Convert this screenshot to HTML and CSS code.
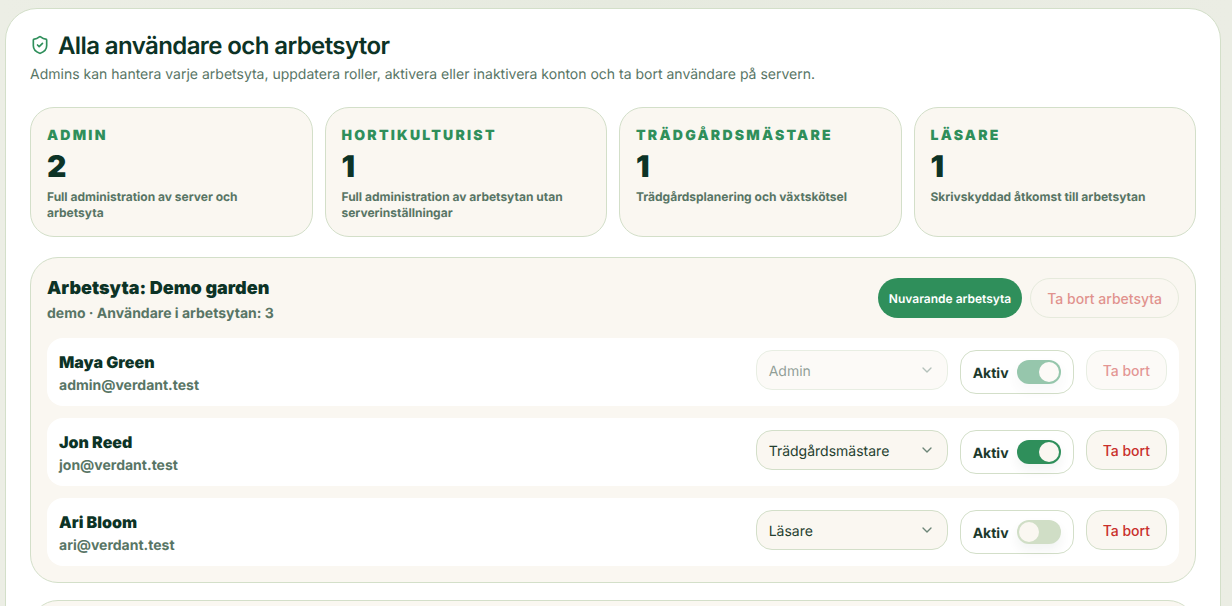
FILE: index.html
```html
<!DOCTYPE html>
<html lang="sv">
<head>
    <meta charset="UTF-8">
    <meta name="viewport" content="width=device-width, initial-scale=1.0">
    <title>Alla användare och arbetsytor</title>
    <link rel="stylesheet" href="styles.css">
</head>
<body>
    <main class="panel">
        <div class="panel-title">
            <svg class="shield" viewBox="0 0 24 24" fill="none" stroke="currentColor" stroke-width="2" stroke-linecap="round" stroke-linejoin="round">
                <path d="M20 13c0 5-3.5 7.5-7.66 8.95a1 1 0 0 1-.67-.01C7.5 20.5 4 18 4 13V6a1 1 0 0 1 1-1c2 0 4.5-1.2 6.24-2.72a1.17 1.17 0 0 1 1.52 0C14.51 3.81 17 5 19 5a1 1 0 0 1 1 1z"/>
                <path d="m9 12 2 2 4-4"/>
            </svg>
            <h1>Alla användare och arbetsytor</h1>
        </div>
        <p class="panel-sub">Admins kan hantera varje arbetsyta, uppdatera roller, aktivera eller inaktivera konton och ta bort användare på servern.</p>

        <!-- Roller -->
        <div class="stats">
            <div class="stat">
                <div class="stat-label">Admin</div>
                <div class="stat-num">2</div>
                <p class="stat-text">Full administration av server och arbetsyta</p>
            </div>
            <div class="stat">
                <div class="stat-label">Hortikulturist</div>
                <div class="stat-num">1</div>
                <p class="stat-text">Full administration av arbetsytan utan serverinställningar</p>
            </div>
            <div class="stat">
                <div class="stat-label">Trädgårdsmästare</div>
                <div class="stat-num">1</div>
                <p class="stat-text">Trädgårdsplanering och växtskötsel</p>
            </div>
            <div class="stat">
                <div class="stat-label">Läsare</div>
                <div class="stat-num">1</div>
                <p class="stat-text">Skrivskyddad åtkomst till arbetsytan</p>
            </div>
        </div>

        <!-- Arbetsyta -->
        <section class="workspace">
            <div class="workspace-head">
                <div class="workspace-info">
                    <h2>Arbetsyta: Demo garden</h2>
                    <p class="workspace-meta">demo · Användare i arbetsytan: 3</p>
                </div>
                <div class="workspace-actions">
                    <span class="current-pill">Nuvarande arbetsyta</span>
                    <button class="btn-remove btn-workspace is-disabled">Ta bort arbetsyta</button>
                </div>
            </div>

            <div class="user-row">
                <div class="user-info">
                    <div class="user-name">Maya Green</div>
                    <div class="user-email">admin@verdant.test</div>
                </div>
                <div class="role-select is-disabled">
                    <span>Admin</span>
                    <svg class="chevron" viewBox="0 0 24 24" fill="none" stroke="currentColor" stroke-width="2" stroke-linecap="round" stroke-linejoin="round"><path d="m6 9 6 6 6-6"/></svg>
                </div>
                <div class="status">
                    <span>Aktiv</span>
                    <span class="switch on is-disabled"><i class="knob"></i></span>
                </div>
                <button class="btn-remove is-disabled">Ta bort</button>
            </div>

            <div class="user-row">
                <div class="user-info">
                    <div class="user-name">Jon Reed</div>
                    <div class="user-email">jon@verdant.test</div>
                </div>
                <div class="role-select">
                    <span>Trädgårdsmästare</span>
                    <svg class="chevron" viewBox="0 0 24 24" fill="none" stroke="currentColor" stroke-width="2" stroke-linecap="round" stroke-linejoin="round"><path d="m6 9 6 6 6-6"/></svg>
                </div>
                <div class="status">
                    <span>Aktiv</span>
                    <span class="switch on"><i class="knob"></i></span>
                </div>
                <button class="btn-remove">Ta bort</button>
            </div>

            <div class="user-row">
                <div class="user-info">
                    <div class="user-name">Ari Bloom</div>
                    <div class="user-email">ari@verdant.test</div>
                </div>
                <div class="role-select">
                    <span>Läsare</span>
                    <svg class="chevron" viewBox="0 0 24 24" fill="none" stroke="currentColor" stroke-width="2" stroke-linecap="round" stroke-linejoin="round"><path d="m6 9 6 6 6-6"/></svg>
                </div>
                <div class="status">
                    <span>Aktiv</span>
                    <span class="switch"><i class="knob"></i></span>
                </div>
                <button class="btn-remove">Ta bort</button>
            </div>
        </section>

        <section class="workspace workspace-next"></section>
    </main>
</body>
</html>
```

FILE: styles.css
```css
html, body {
    height: 606px;
    overflow: hidden;
}
body {
    margin: 0;
    padding: 8px 11px 0 5px;
    box-sizing: border-box;
    background: linear-gradient(90deg, #eceee5, #e6eadf 50%, #ebede4);
    font-family: Inter, "Liberation Sans", sans-serif;
    text-rendering: geometricPrecision;
    color: #0c3326;
}
.panel {
    background-color: white;
    border: 1px solid #d3dfc9;
    border-radius: 32px;
    padding: 23px 24px 24px;
    min-height: 800px;
    box-sizing: border-box;
}
.panel-title {
    display: flex;
    align-items: center;
    gap: 8px;
}
.shield {
    width: 20px;
    height: 20px;
    color: #2f8f5b;
    margin-top: -2px;
}
h1 {
    margin: 0;
    font-size: 24px;
    line-height: 28px;
    font-weight: 600;
    letter-spacing: -0.6px;
    color: #0c3326;
}
.panel-sub {
    margin: 5px 0 0;
    font-size: 14px;
    line-height: 20px;
    color: #587565;
}
.stats {
    display: grid;
    grid-template-columns: repeat(4, 1fr);
    gap: 12px;
    margin-top: 22px;
}
.stat {
    height: 130px;
    box-sizing: border-box;
    background-color: #faf7f1;
    border: 1px solid #d3dfc9;
    border-radius: 24px;
    padding: 18px 16px 16px;
}
.stat-label {
    font-size: 14px;
    line-height: 20px;
    font-weight: 900;
    letter-spacing: 0.16em;
    text-transform: uppercase;
    color: #2f8f5b;
}
.stat-num {
    margin-top: 3px;
    font-size: 30px;
    line-height: 36px;
    font-weight: 900;
    color: #0c3326;
}
.stat-text {
    margin: 4px 0 0;
    font-size: 12px;
    line-height: 16px;
    font-weight: 700;
    color: #587565;
}
.workspace {
    background-color: #faf7f1;
    border: 1px solid #d3dfc9;
    border-radius: 28px;
    padding: 16px;
    margin-top: 20px;
}
.workspace-next {
    margin-top: 17px;
    height: 200px;
}
.workspace-head {
    display: flex;
    justify-content: space-between;
    align-items: flex-start;
    height: 52px;
}
.workspace-info {
    padding-top: 1px;
}
h2 {
    margin: 0;
    font-size: 18px;
    line-height: 28px;
    font-weight: 900;
    color: #0c3326;
}
.workspace-meta {
    margin: 1px 0 0;
    font-size: 14px;
    line-height: 20px;
    font-weight: 700;
    color: #587565;
}
.workspace-actions {
    display: flex;
    align-items: center;
    gap: 8px;
    padding-top: 4px;
}
.current-pill {
    display: flex;
    align-items: center;
    height: 40px;
    padding: 0 11px;
    border-radius: 20px;
    background-color: #2f8f5b;
    color: white;
    font-size: 12px;
    font-weight: 600;
}
.btn-remove {
    height: 40px;
    padding: 0 16px;
    background-color: #faf7f1;
    border: 1px solid #d3dfc9;
    border-radius: 16px;
    color: #c9302c;
    font-family: inherit;
    font-size: 14px;
    font-weight: 500;
}
.btn-workspace {
    border-radius: 20px;
}
.is-disabled {
    opacity: 0.5;
}
.user-row {
    display: flex;
    align-items: flex-start;
    gap: 12px;
    height: 68px;
    box-sizing: border-box;
    background-color: white;
    border-radius: 16px;
    padding: 12px;
    margin-top: 12px;
}
.user-info {
    flex: 1;
}
.user-name {
    font-size: 16px;
    line-height: 24px;
    font-weight: 900;
    color: #0c3326;
}
.user-email {
    margin-top: 2px;
    font-size: 14px;
    line-height: 20px;
    font-weight: 700;
    color: #587565;
}
.role-select {
    display: flex;
    align-items: center;
    justify-content: space-between;
    width: 192px;
    height: 40px;
    box-sizing: border-box;
    padding: 0 12px;
    background-color: #faf7f1;
    border: 1px solid #d3dfc9;
    border-radius: 16px;
    font-size: 14px;
    color: #25402f;
}
.role-select span {
    margin-top: 2px;
}
.chevron {
    width: 16px;
    height: 16px;
    color: #6c8577;
}
.status {
    display: flex;
    align-items: center;
    gap: 8px;
    width: 114px;
    height: 44px;
    box-sizing: border-box;
    padding: 0 12px;
    background-color: white;
    border: 1px solid #d3dfc9;
    border-radius: 16px;
    font-size: 14px;
    font-weight: 700;
    color: #1d3a2c;
}
.status span:first-child {
    margin-top: 2px;
}
.switch {
    display: flex;
    align-items: center;
    width: 44px;
    height: 24px;
    box-sizing: border-box;
    padding: 2px;
    border-radius: 12px;
    background-color: #d0dec6;
    box-shadow: 0 6px 12px rgba(12, 51, 38, 0.06);
}
.switch.on {
    justify-content: flex-end;
    background-color: #2f8f5b;
}
.knob {
    display: block;
    width: 20px;
    height: 20px;
    border-radius: 50%;
    background-color: #faf7f1;
}
```
